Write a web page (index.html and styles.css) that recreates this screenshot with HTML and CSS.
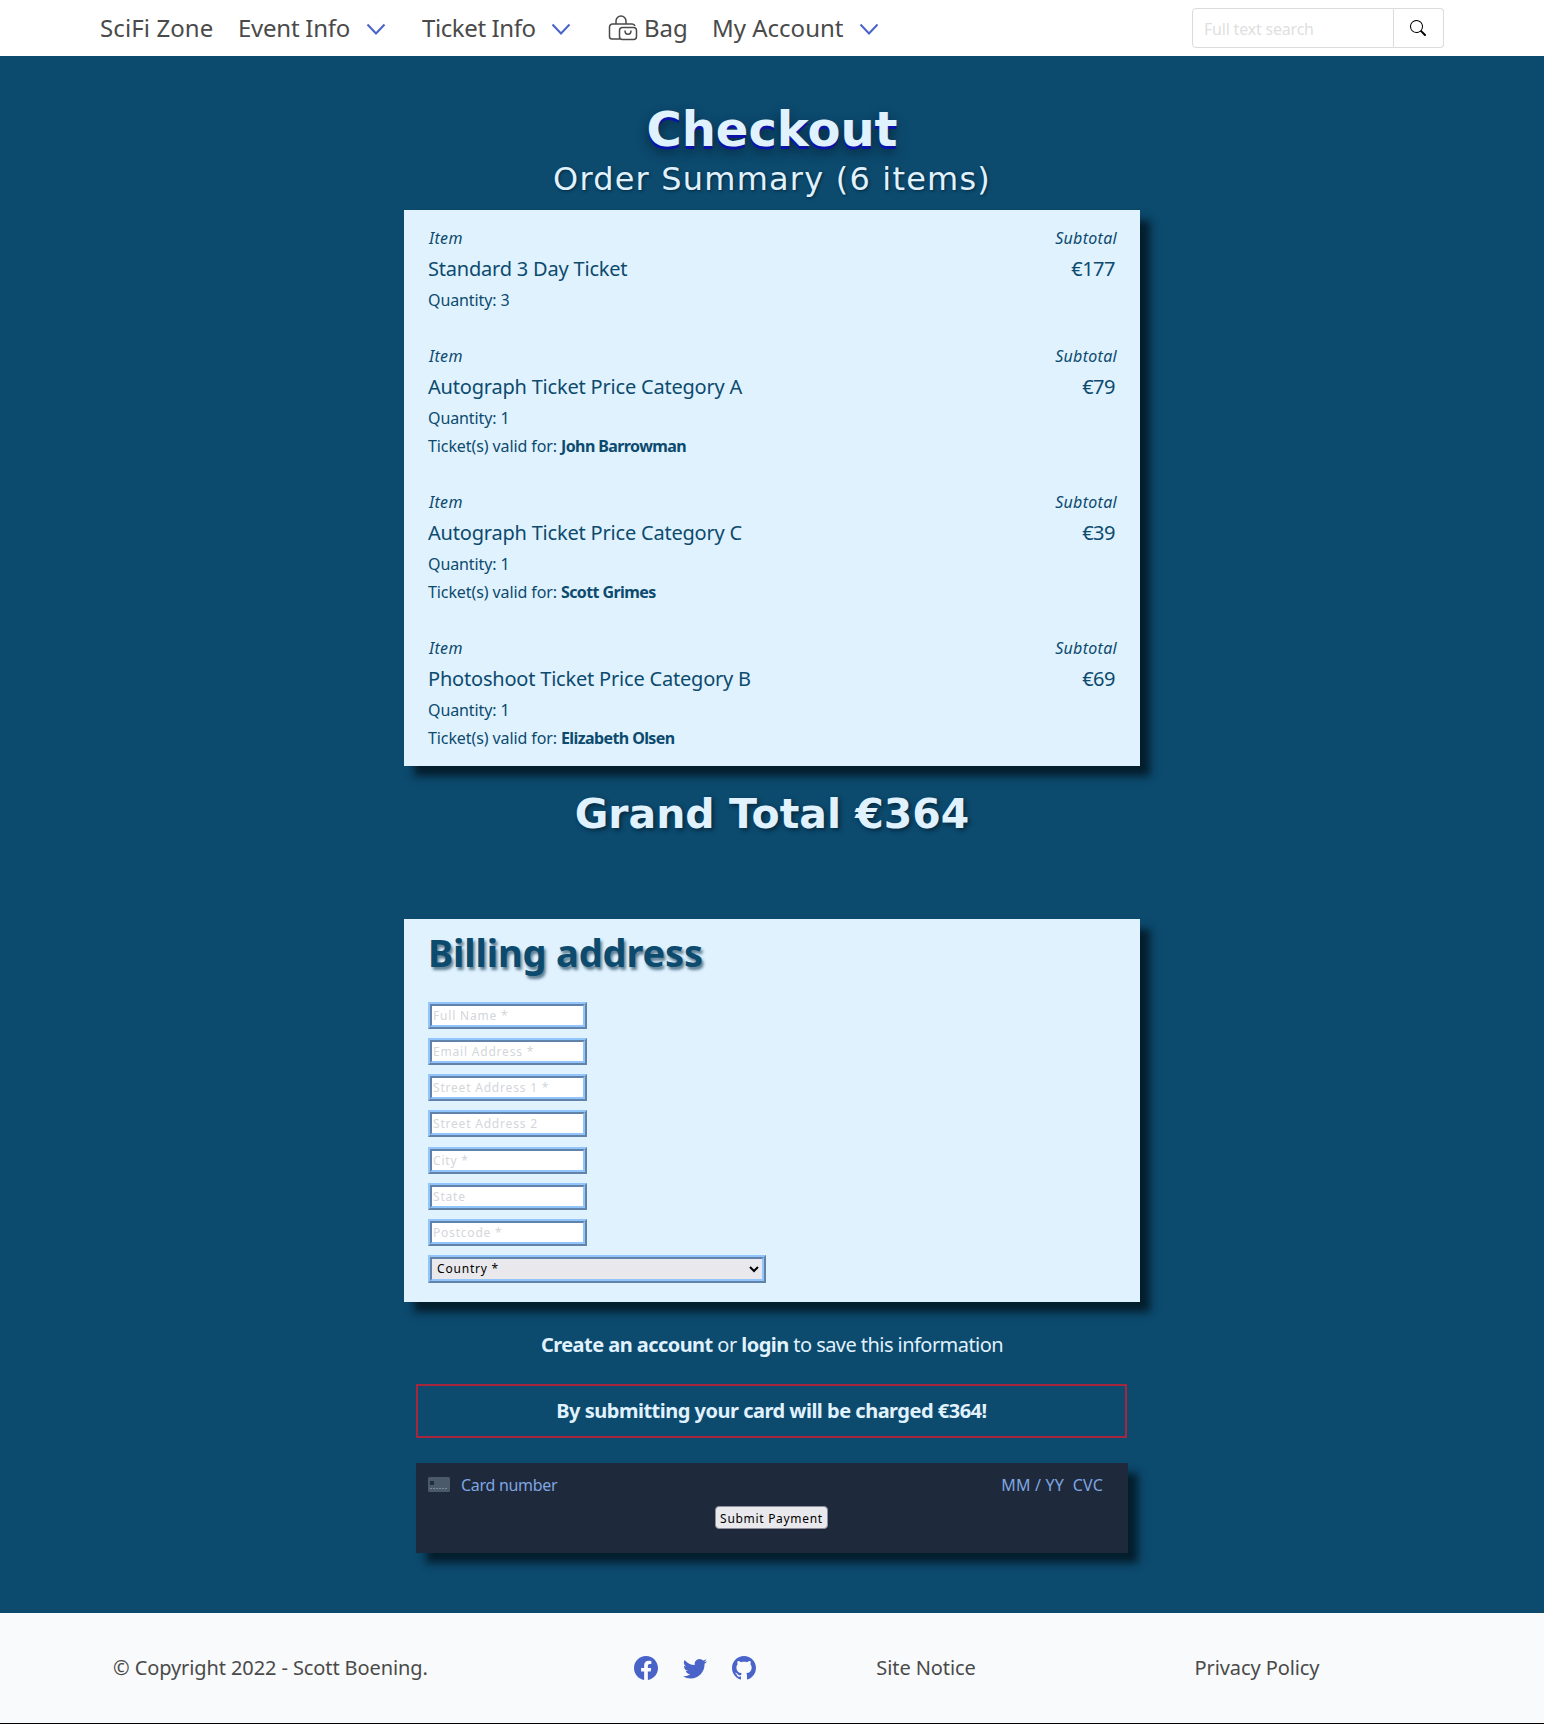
FILE: index.html
```html
<!DOCTYPE html>
<html lang="en">
<head>
    <meta charset="UTF-8">
    <meta name="viewport" content="width=device-width, initial-scale=1.0">
    <title>Checkout - SciFi Zone</title>
    <link rel="stylesheet" href="styles.css">
</head>
<body>
    <nav class="navbar">
        <a class="nav-link brand" href="#">SciFi Zone</a>
        <a class="nav-link nav-event" href="#">Event Info
            <svg class="caret" viewBox="0 0 20 12"><path d="M1.5 1.5 10 10.5 18.5 1.5"/></svg>
        </a>
        <a class="nav-link nav-ticket" href="#">Ticket Info
            <svg class="caret" viewBox="0 0 20 12"><path d="M1.5 1.5 10 10.5 18.5 1.5"/></svg>
        </a>
        <a class="nav-link nav-bag" href="#">
            <svg class="bag-icon" viewBox="0 0 30 26">
                <path d="M8 9V6a5 5 0 0 1 10 0v3"/>
                <path d="M12 24H4a2.500 2.500 0 0 1-2.500-2.500V12A3 3 0 0 1 4.500 9H24a3 3 0 0 1 3 2"/>
                <rect x="11.500" y="12.500" width="17" height="12" rx="3"/>
                <path d="M17 15.500c0 5 6 5 6 0"/>
            </svg>
            Bag
        </a>
        <a class="nav-link nav-account" href="#">My Account
            <svg class="caret" viewBox="0 0 20 12"><path d="M1.5 1.5 10 10.5 18.5 1.5"/></svg>
        </a>
        <form class="search">
            <input class="search-input" type="text" placeholder="Full text search">
            <button class="search-btn" type="button">
                <svg viewBox="0 0 16 16" width="16" height="16"><path d="M11.742 10.344a6.5 6.5 0 1 0-1.397 1.398h-.001c.03.04.062.078.098.115l3.85 3.85a1 1 0 0 0 1.415-1.414l-3.85-3.85a1.007 1.007 0 0 0-.115-.1zM12 6.5a5.500 5.500 0 1 1-11 0 5.500 5.500 0 0 1 11 0z"/></svg>
            </button>
        </form>
    </nav>

    <main class="content">
        <h1 class="page-title">Checkout</h1>
        <h2 class="page-subtitle">Order Summary (6 items)</h2>

        <section class="card summary">
            <div class="item">
                <div class="item-row labels"><span>Item</span><span>Subtotal</span></div>
                <div class="item-row names"><span>Standard 3 Day Ticket</span><span class="price">€177</span></div>
                <p class="item-line">Quantity: 3</p>
            </div>
            <div class="item">
                <div class="item-row labels"><span>Item</span><span>Subtotal</span></div>
                <div class="item-row names"><span>Autograph Ticket Price Category A</span><span class="price">€79</span></div>
                <p class="item-line">Quantity: 1</p>
                <p class="item-line">Ticket(s) valid for: <strong>John Barrowman</strong></p>
            </div>
            <div class="item">
                <div class="item-row labels"><span>Item</span><span>Subtotal</span></div>
                <div class="item-row names"><span>Autograph Ticket Price Category C</span><span class="price">€39</span></div>
                <p class="item-line">Quantity: 1</p>
                <p class="item-line">Ticket(s) valid for: <strong>Scott Grimes</strong></p>
            </div>
            <div class="item last">
                <div class="item-row labels"><span>Item</span><span>Subtotal</span></div>
                <div class="item-row names"><span>Photoshoot Ticket Price Category B</span><span class="price">€69</span></div>
                <p class="item-line">Quantity: 1</p>
                <p class="item-line">Ticket(s) valid for: <strong>Elizabeth Olsen</strong></p>
            </div>
        </section>

        <h2 class="grand-total">Grand Total €364</h2>

        <section class="card billing">
            <h2 class="billing-title">Billing address</h2>
            <form class="billing-form">
                <input class="field" type="text" placeholder="Full Name *">
                <input class="field" type="text" placeholder="Email Address *">
                <input class="field" type="text" placeholder="Street Address 1 *">
                <input class="field" type="text" placeholder="Street Address 2">
                <input class="field" type="text" placeholder="City *">
                <input class="field" type="text" placeholder="State">
                <input class="field" type="text" placeholder="Postcode *">
                <select class="country"><option>Country *</option></select>
            </form>
        </section>

        <p class="account-note"><strong>Create an account</strong> or <strong>login</strong> to save this information</p>

        <div class="charge-box">By submitting your card will be charged €364!</div>

        <section class="payment">
            <div class="card-line">
                <svg class="card-icon" viewBox="0 0 22 15">
                    <rect width="22" height="15" rx="1.500" fill="#4a5a6b"/>
                    <rect x="2" y="4" width="4" height="4" fill="#222c3a"/>
                    <path d="M2 11.500h18" stroke="#7c8a99" stroke-dasharray="2 1"/>
                </svg>
                <span class="card-number">Card number</span>
                <span class="card-extra">MM / YY&nbsp; CVC</span>
            </div>
            <button class="submit-btn" type="button">Submit Payment</button>
        </section>
    </main>

    <footer class="footer">
        <p class="copyright">© Copyright 2022 - Scott Boening.</p>
        <div class="social">
            <svg viewBox="0 0 16 16"><path d="M16 8.049c0-4.446-3.582-8.050-8-8.050C3.580 0-.002 3.603-.002 8.050c0 4.017 2.926 7.347 6.750 7.951v-5.625h-2.030V8.050H6.750V6.275c0-2.017 1.195-3.131 3.022-3.131.876 0 1.791.157 1.791.157v1.980h-1.009c-.993 0-1.303.621-1.303 1.258v1.510h2.218l-.354 2.326H9.250V16c3.824-.604 6.750-3.934 6.750-7.951z"/></svg>
            <svg viewBox="0 0 16 16"><path d="M5.026 15c6.038 0 9.341-5.003 9.341-9.334 0-.14 0-.282-.006-.422A6.685 6.685 0 0 0 16 3.542a6.658 6.658 0 0 1-1.889.518 3.301 3.301 0 0 0 1.447-1.817 6.533 6.533 0 0 1-2.087.793A3.286 3.286 0 0 0 7.875 6.030a9.325 9.325 0 0 1-6.767-3.429 3.289 3.289 0 0 0 1.018 4.382A3.323 3.323 0 0 1 .64 6.575v.045a3.288 3.288 0 0 0 2.632 3.218 3.203 3.203 0 0 1-.865.115 3.230 3.230 0 0 1-.614-.057 3.283 3.283 0 0 0 3.067 2.277A6.588 6.588 0 0 1 .78 13.580a6.320 6.320 0 0 1-.78-.045A9.344 9.344 0 0 0 5.026 15z"/></svg>
            <svg viewBox="0 0 16 16"><path d="M8 0C3.580 0 0 3.580 0 8c0 3.540 2.290 6.530 5.470 7.590.4.070.55-.17.55-.38 0-.19-.01-.82-.01-1.490-2.010.37-2.530-.49-2.690-.94-.09-.23-.48-.94-.82-1.130-.28-.15-.68-.52-.01-.53.63-.01 1.080.58 1.230.82.72 1.210 1.870.87 2.330.66.07-.52.28-.87.51-1.070-1.780-.2-3.640-.89-3.640-3.950 0-.87.31-1.590.82-2.150-.08-.2-.36-1.020.08-2.120 0 0 .67-.21 2.200.82.64-.18 1.320-.27 2-.27.68 0 1.360.09 2 .27 1.530-1.040 2.200-.82 2.200-.82.44 1.100.16 1.920.08 2.120.51.56.82 1.270.82 2.150 0 3.070-1.870 3.750-3.650 3.950.29.25.54.73.54 1.480 0 1.070-.01 1.930-.01 2.200 0 .21.15.46.55.38A8.012 8.012 0 0 0 16 8c0-4.420-3.580-8-8-8z"/></svg>
        </div>
        <a class="footer-link" href="#">Site Notice</a>
        <a class="footer-link" href="#">Privacy Policy</a>
    </footer>
</body>
</html>
```

FILE: styles.css
```css
* {
    box-sizing: border-box;
}
html, body {
    margin: 0;
    padding: 0;
}
body {
    font-family: "Noto Sans", Roboto, sans-serif;
    background-color: #0c4a6e;
    color: #0c4a6e;
    min-height: 1724px;
    display: flex;
    flex-direction: column;
}
a {
    text-decoration: none;
    color: inherit;
}

/* top bar */
.navbar {
    height: 56px;
    background-color: #fff;
    display: flex;
    align-items: center;
    padding-left: 100px;
    color: #4a4a4a;
    font-size: 24px;
}
.nav-link {
    display: flex;
    align-items: center;
    white-space: nowrap;
    margin-top: -2px;
}
.brand {
    width: 138px;
    letter-spacing: 0.1px;
}
.nav-event {
    width: 184px;
    letter-spacing: -0.25px;
}
.nav-ticket {
    width: 186px;
    letter-spacing: -0.4px;
}
.nav-ticket .caret {
    margin-left: 15px;
}
.nav-bag {
    width: 104px;
}
.caret {
    width: 20px;
    height: 12px;
    margin-left: 16px;
    margin-top: 4px;
    fill: none;
    stroke: #4a63c8;
    stroke-width: 2;
}
.bag-icon {
    width: 30px;
    height: 26px;
    margin-right: 6px;
    margin-top: 2px;
    fill: none;
    stroke: #4a4a4a;
    stroke-width: 1.5;
}
.search {
    margin-left: auto;
    margin-right: 100px;
    display: flex;
    height: 40px;
    width: 252px;
}
.search-input {
    width: 202px;
    border: 1px solid #dbdbdb;
    border-radius: 4px 0 0 4px;
    padding: 2px 11px 0;
    font-size: 16px;
    letter-spacing: -0.2px;
    font-family: "Noto Sans", sans-serif;
    color: #363636;
}
.search-input::placeholder {
    color: #dfdfdf;
}
.search-btn {
    width: 50px;
    border: 1px solid #dbdbdb;
    border-left: none;
    border-radius: 0 4px 4px 0;
    background-color: #fff;
    display: flex;
    align-items: center;
    justify-content: center;
    padding: 0 2px 0 0;
}

/* main column */
.content {
    flex: 1;
    display: flex;
    flex-direction: column;
    align-items: center;
    padding-top: 45px;
}
.page-title {
    margin: 0;
    font-family: "DejaVu Sans", sans-serif;
    font-size: 48px;
    line-height: 56px;
    font-weight: bold;
    color: #e0f2fe;
    text-shadow: 0 3px 0 #0a12a8, 0 6px 12px #06283d;
}
.page-subtitle {
    margin: 1px 0 10px;
    font-family: "DejaVu Sans", sans-serif;
    font-size: 32px;
    line-height: 42px;
    font-weight: normal;
    letter-spacing: 1.2px;
    color: #e0f2fe;
    text-shadow: 1px 1px 3px #06283d;
}
.card {
    width: 736px;
    background-color: #e0f2fe;
    box-shadow: 10px 10px 8px #041e2d;
}
.summary {
    padding: 14px 23px 14px 24px;
}
.item {
    margin-bottom: 28px;
}
.item.last {
    margin-bottom: 0;
}
.item-row {
    display: flex;
    justify-content: space-between;
}
.labels {
    padding-left: 1px;
    font-size: 16px;
    line-height: 28px;
    font-style: italic;
    letter-spacing: 0.3px;
}
.names {
    font-size: 20px;
    line-height: 34px;
    letter-spacing: -0.2px;
}
.price {
    margin-right: 2px;
    letter-spacing: -0.5px;
}
.item-line {
    margin: 0;
    font-size: 16px;
    line-height: 28px;
    letter-spacing: -0.1px;
}
.item-line strong {
    letter-spacing: -0.6px;
}
.grand-total {
    margin: 25px 0 82px;
    font-family: "DejaVu Sans", sans-serif;
    font-size: 41px;
    line-height: 46px;
    font-weight: bold;
    color: #e0f2fe;
    text-shadow: 2px 2px 4px #06283d;
}

/* billing */
.billing {
    height: 383px;
    padding: 9px 24px 0;
}
.billing-title {
    margin: 0 0 26px;
    font-size: 38px;
    line-height: 48px;
    font-weight: bold;
    letter-spacing: -0.15px;
    color: #0c4a6e;
    text-shadow: 2px 3px 3px #5d7d92;
}
.billing-form {
    display: flex;
    flex-direction: column;
    align-items: flex-start;
    gap: 9.15px;
}
.field {
    width: 159px;
    height: 27px;
    border: 4px ridge #93c5fd;
    padding: 0 1px;
    font-size: 12px;
    letter-spacing: 0.8px;
    font-family: "Noto Sans", sans-serif;
    background-color: #fff;
}
.field::placeholder {
    color: #d3d6da;
}
.country {
    width: 338px;
    height: 28px;
    border: 4px ridge #93c5fd;
    padding-left: 1px;
    background-color: #e9e9ed;
    font-size: 12px;
    letter-spacing: 0.8px;
    font-family: "Noto Sans", sans-serif;
    color: #000;
}

/* payment */
.account-note {
    margin: 29px 0 0;
    font-size: 20px;
    line-height: 28px;
    letter-spacing: -0.55px;
    color: #e0f2fe;
}
.charge-box {
    margin-top: 25px;
    margin-right: 1px;
    width: 711px;
    height: 54px;
    border: 2px solid #a5263d;
    padding-bottom: 2px;
    display: flex;
    align-items: center;
    justify-content: center;
    font-size: 20px;
    font-weight: bold;
    letter-spacing: -0.5px;
    color: #e0f2fe;
}
.payment {
    margin-top: 25px;
    width: 712px;
    height: 90px;
    background-color: #1e293b;
    box-shadow: 10px 10px 8px #041e2d;
    display: flex;
    flex-direction: column;
    align-items: center;
}
.card-line {
    width: 100%;
    height: 43px;
    display: flex;
    align-items: center;
    padding: 0 25px 0 12px;
    font-size: 16px;
    color: #7ea6e0;
}
.card-icon {
    width: 22px;
    height: 15px;
    margin-right: 11px;
}
.card-number {
    letter-spacing: -0.3px;
}
.card-extra {
    margin-left: auto;
    letter-spacing: 0.2px;
}
.submit-btn {
    width: 113px;
    height: 23px;
    margin-right: 1px;
    padding: 1px 0 0;
    border: 1px solid #8f8f9d;
    border-radius: 4px;
    background-color: #e9e9ed;
    color: #000;
    font-size: 12px;
    letter-spacing: 0.7px;
    font-family: "Noto Sans", sans-serif;
}

/* footer */
.footer {
    height: 111px;
    background-color: #f9fafb;
    border-bottom: 1px solid #000;
    display: grid;
    grid-template-columns: 447px 270px 192px 470px;
    padding-left: 113px;
    align-items: center;
    color: #4a4a4a;
    font-size: 20px;
    letter-spacing: -0.1px;
    line-height: 24px;
    margin-top: 60px;
}
.copyright {
    margin: 0;
}
.social {
    display: flex;
    justify-content: center;
    gap: 25px;
}
.social svg {
    width: 24px;
    height: 24px;
    fill: #4a63c8;
}
.footer-link {
    text-align: center;
}
```
